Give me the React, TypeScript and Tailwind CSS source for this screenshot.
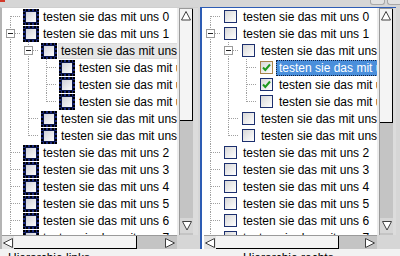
import React from 'react';

type RowDef = {
  level: number;
  text: string;
  first?: boolean;
  last: boolean;
  expanded?: boolean;
  guides: boolean[];
};

const rows: RowDef[] = [
  { level: 0, text: 'testen sie das mit uns 0', first: true, last: false, guides: [] },
  { level: 0, text: 'testen sie das mit uns 1', last: false, expanded: true, guides: [] },
  { level: 1, text: 'testen sie das mit uns 1.0', last: false, expanded: true, guides: [true] },
  { level: 2, text: 'testen sie das mit uns 1.0.0', last: false, guides: [true, true] },
  { level: 2, text: 'testen sie das mit uns 1.0.1', last: false, guides: [true, true] },
  { level: 2, text: 'testen sie das mit uns 1.0.2', last: true, guides: [true, true] },
  { level: 1, text: 'testen sie das mit uns 1.1', last: false, guides: [true] },
  { level: 1, text: 'testen sie das mit uns 1.2', last: true, guides: [true] },
  { level: 0, text: 'testen sie das mit uns 2', last: false, guides: [] },
  { level: 0, text: 'testen sie das mit uns 3', last: false, guides: [] },
  { level: 0, text: 'testen sie das mit uns 4', last: false, guides: [] },
  { level: 0, text: 'testen sie das mit uns 5', last: false, guides: [] },
  { level: 0, text: 'testen sie das mit uns 6', last: false, guides: [] },
  { level: 0, text: 'testen sie das mit uns 7', last: false, guides: [] },
];

const LINE = '#a0a0a0';

function Guide({ on }: { on: boolean }) {
  return (
    <svg width="18" height="17" className="shrink-0 block">
      {on && <line x1="8.5" y1="0" x2="8.5" y2="17" stroke={LINE} strokeDasharray="1 1" />}
    </svg>
  );
}

function Connector({ first, last, expanded }: { first?: boolean; last: boolean; expanded?: boolean }) {
  return (
    <svg width="18" height="17" className="shrink-0 block">
      <line x1="8.5" y1={first ? 8 : 0} x2="8.5" y2={last ? 9 : 17} stroke={LINE} strokeDasharray="1 1" />
      <line x1="9" y1="8.5" x2="18" y2="8.5" stroke={LINE} strokeDasharray="1 1" />
      {expanded && (
        <>
          <rect x="4.5" y="4.5" width="8" height="8" fill="white" stroke="#9a9a9a" />
          <line x1="6" y1="8.5" x2="11" y2="8.5" stroke="#202020" />
        </>
      )}
    </svg>
  );
}

function LeftCheck() {
  return (
    <div className="w-[16px] h-[16px] shrink-0 border-2 border-dotted border-black bg-[#1d2a7a] flex">
      <div className="flex-1 border border-[#0c1850] bg-gradient-to-br from-[#cfd0d8] to-[#fbfbfb]" />
    </div>
  );
}

function RightCheck({ checked, hover }: { checked?: boolean; hover?: boolean }) {
  return (
    <div
      className={
        'w-[13px] h-[13px] shrink-0 border flex items-center justify-center bg-gradient-to-br from-[#d8d8d8] to-white ' +
        (hover ? 'border-[#a8844a]' : 'border-[#1c2f6e]')
      }
    >
      {checked && (
        <svg width="11" height="11" viewBox="0 0 11 11" className="block">
          <path d="M2 5.5 L4.3 8 L9 2.5" fill="none" stroke="#1f9a1f" strokeWidth="2" />
        </svg>
      )}
    </div>
  );
}

function TriUp() {
  return (
    <svg width="12" height="11" className="block">
      <polygon points="6,1.5 10.5,10 1.5,10" fill="white" stroke="#404040" />
    </svg>
  );
}
function TriDown() {
  return (
    <svg width="12" height="11" className="block">
      <polygon points="1.5,1.5 10.5,1.5 6,10" fill="white" stroke="#404040" />
    </svg>
  );
}
function TriLeft() {
  return (
    <svg width="12" height="12" className="block">
      <polygon points="1.5,6 10.5,1.5 10.5,10.5" fill="white" stroke="#404040" />
    </svg>
  );
}
function TriRight() {
  return (
    <svg width="12" height="12" className="block">
      <polygon points="10.5,6 1.5,1.5 1.5,10.5" fill="white" stroke="#404040" />
    </svg>
  );
}

function VScroll({ thumb }: { thumb: number }) {
  return (
    <div className="w-[16px] h-full flex shrink-0">
      <div className="w-[2px] h-full bg-[#ececec]" />
      <div className="w-[14px] h-full flex flex-col bg-[#c4c4c4] border-l border-t border-[#9a9a9a]">
        <div className="flex flex-col bg-[#f4f4f4] border-r border-b border-black" style={{ height: thumb }}>
          <div className="h-[15px] flex items-start justify-center pt-[1px]">
            <TriUp />
          </div>
        </div>
        <div className="flex-1" />
        <div className="h-[15px] bg-[#d6d6d6] flex items-center justify-center">
          <TriDown />
        </div>
        <div className="h-[2px]" />
      </div>
    </div>
  );
}

function HScroll({ thumb, inset }: { thumb: number; inset?: boolean }) {
  return (
    <div
      className={
        'h-[14px] flex shrink-0 bg-[#c4c4c4] border-t border-[#9a9a9a] ' +
        (inset ? 'w-[173px] ml-[2px]' : 'w-[175px]')
      }
    >
      <div className="w-[12px] h-full bg-[#e4e4e4] flex items-center justify-center">
        <TriLeft />
      </div>
      <div className="h-full bg-[#f4f4f4] border-r border-b border-black" style={{ width: thumb }} />
      <div className="flex-1" />
      <div className="w-[15px] h-full flex items-center justify-center">
        <TriRight />
      </div>
    </div>
  );
}

function Tree({ variant }: { variant: 'left' | 'right' }) {
  return (
    <div className="w-[175px] h-full overflow-hidden bg-white shrink-0">
      <div className="flex flex-col w-max">
        {rows.map((r, i) => {
          const leftSel = variant === 'left' && i === 2;
          const rightSel = variant === 'right' && i === 3;
          return (
            <div key={i} className="flex items-center h-[17px] shrink-0">
              {r.guides.map((g, k) => (
                <Guide key={k} on={g} />
              ))}
              <Connector first={r.first} last={r.last} expanded={r.expanded} />
              {variant === 'left' ? (
                <div className="ml-[3px]">
                  <LeftCheck />
                </div>
              ) : (
                <div className="ml-[4px]">
                  <RightCheck checked={i === 3 || i === 4} hover={i === 3} />
                </div>
              )}
              <div
                className={
                  'h-[16px] leading-[15px] px-[2px] whitespace-nowrap text-[12px] shrink-0 border ' +
                  (variant === 'left' ? 'ml-[1px] ' : 'ml-[3px] ') +
                  (leftSel
                    ? 'bg-[#e6e6e6] border-[#dcdcdc] text-black'
                    : rightSel
                    ? 'bg-[#4a8fdb] border-dotted border-[#102040] text-white'
                    : 'border-transparent text-black')
                }
              >
                {r.text}
              </div>
            </div>
          );
        })}
      </div>
    </div>
  );
}

export default function App() {
  return (
    <div className="w-[400px] h-[256px] overflow-hidden bg-[#d6d6d6] flex flex-col font-['Liberation_Sans',Arial,sans-serif]">
      {/* top window strip */}
      <div className="h-[7px] flex shrink-0 items-start">
        <div className="w-[5px] h-[2px] bg-[#d23a2a]" />
        <div className="flex-1" />
        <div className="w-[15px] h-[5px] border border-t-0 border-[#a8a8a8] rounded-b-[3px] bg-[#e2e2e2]" />
        <div className="w-[2px]" />
        <div className="w-[13px] h-[5px] border border-t-0 border-r-0 border-[#a8a8a8] rounded-bl-[3px] bg-[#e2e2e2]" />
      </div>

      {/* panels */}
      <div className="h-[242px] flex shrink-0">
        {/* left panel */}
        <div className="w-[198px] h-full flex flex-col border-l-2 border-t border-[#b4b4b4] border-t-[#cfcfcf] shrink-0">
          <div className="h-[227px] flex">
            <Tree variant="left" />
            <VScroll thumb={112} />
            <div className="flex-1 bg-[#dcdcdc]" />
          </div>
          <div className="flex-1 flex">
            <HScroll thumb={123} />
            <div className="flex-1 bg-[#d6d6d6]" />
          </div>
        </div>
        <div className="w-[2px] shrink-0" />
        {/* right panel */}
        <div className="w-[196px] h-full flex flex-col border-l-2 border-t border-[#2d5cb4] shrink-0">
          <div className="h-[227px] flex">
            <Tree variant="right" />
            <VScroll thumb={114} />
            <div className="flex-1 bg-[#dcdcdc]" />
          </div>
          <div className="flex-1 flex bg-white">
            <HScroll thumb={123} inset />
            <div className="flex-1 bg-[#d6d6d6]" />
          </div>
        </div>
      </div>

      {/* bottom strip */}
      <div className="flex-1 bg-[#f2f2f2] flex overflow-hidden text-[12px] leading-[14px] text-black">
        <div className="w-[200px] pl-[8px] pt-[2px] whitespace-nowrap">Hierarchie links</div>
        <div className="pl-[43px] pt-[2px] whitespace-nowrap">Hierarchie rechts</div>
      </div>
    </div>
  );
}
